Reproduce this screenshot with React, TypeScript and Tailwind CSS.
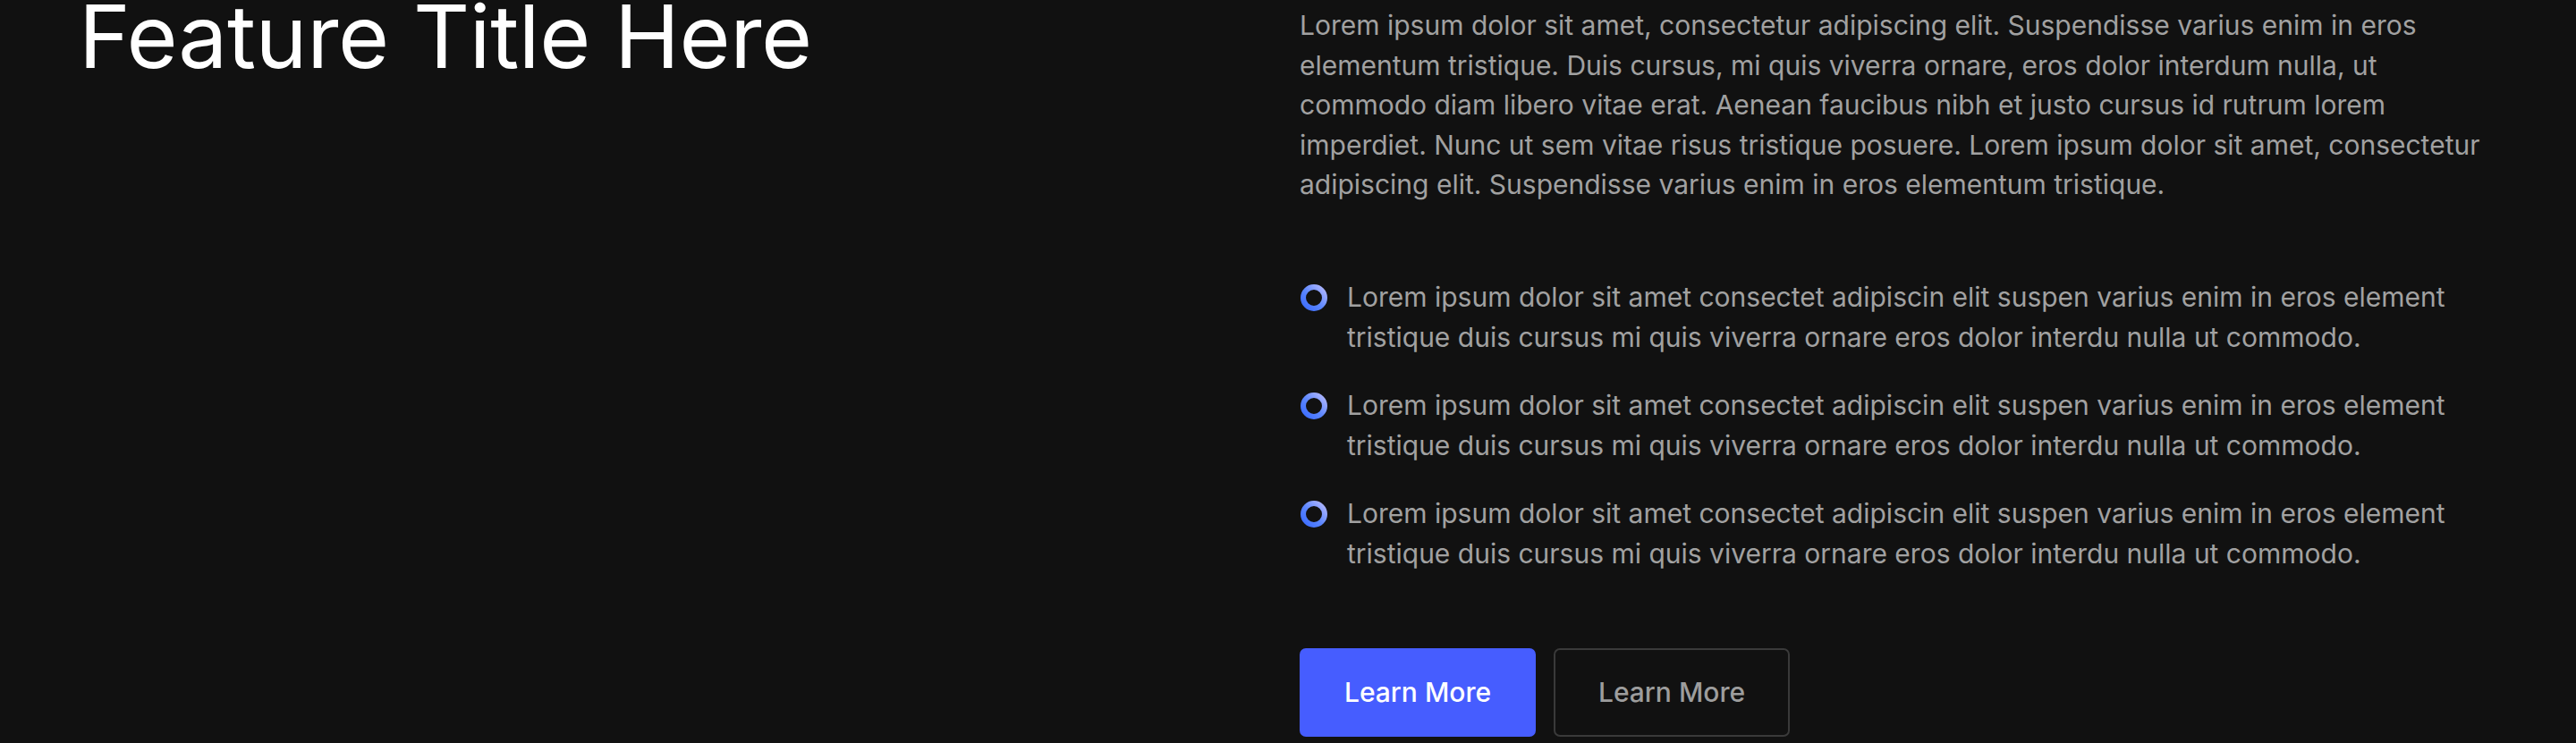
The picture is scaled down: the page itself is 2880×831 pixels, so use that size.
import React from "react";

const items = [
  "Lorem ipsum dolor sit amet consectet adipiscin elit suspen varius enim in eros element tristique duis cursus mi quis viverra ornare eros dolor interdu nulla ut commodo.",
  "Lorem ipsum dolor sit amet consectet adipiscin elit suspen varius enim in eros element tristique duis cursus mi quis viverra ornare eros dolor interdu nulla ut commodo.",
  "Lorem ipsum dolor sit amet consectet adipiscin elit suspen varius enim in eros element tristique duis cursus mi quis viverra ornare eros dolor interdu nulla ut commodo.",
];

// Ring bullet with a blue-to-lavender gradient
const RingIcon: React.FC<{ id: string }> = ({ id }) => (
  <svg width="32" height="32" viewBox="0 0 32 32" className="shrink-0 mt-[7px]">
    <defs>
      <linearGradient id={id} x1="0" y1="1" x2="1" y2="0">
        <stop offset="0%" stopColor="#3b6cff" />
        <stop offset="45%" stopColor="#5b86ff" />
        <stop offset="100%" stopColor="#b3b8ff" />
      </linearGradient>
    </defs>
    <circle cx="16" cy="16" r="12" fill="none" stroke={`url(#${id})`} strokeWidth="6" />
  </svg>
);

const App: React.FC = () => {
  return (
    <div
      className="min-h-[831px] w-full bg-[#111111] overflow-hidden"
      style={{ fontFamily: "Inter, 'Noto Sans', sans-serif" }}
    >
      <div className="grid grid-cols-[1fr_1331px] gap-x-[34px] pl-[88px] pr-[96px] pt-[6px]">
        {/* Left: title */}
        <div>
          <h2 className="-mt-[24px] text-[98px] leading-[1.2] font-normal text-white tracking-[-0.004em]">
            Feature Title Here
          </h2>
        </div>

        {/* Right: copy, list, buttons */}
        <div className="flex flex-col">
          <p className="text-[30px] leading-[44.6px] text-[#a1a1a1]">
            Lorem ipsum dolor sit amet, consectetur adipiscing elit. Suspendisse varius enim in eros
            elementum tristique. Duis cursus, mi quis viverra ornare, eros dolor interdum nulla, ut
            commodo diam libero vitae erat. Aenean faucibus nibh et justo cursus id rutrum lorem
            imperdiet. Nunc ut sem vitae risus tristique posuere. Lorem ipsum dolor sit amet,
            consectetur adipiscing elit. Suspendisse varius enim in eros elementum tristique.
          </p>

          <ul className="mt-[81px] flex flex-col gap-[32px]">
            {items.map((text, i) => (
              <li key={i} className="flex items-start gap-[21px]">
                <RingIcon id={`ring-${i}`} />
                <span className="text-[30px] leading-[44.6px] text-[#a1a1a1]">{text}</span>
              </li>
            ))}
          </ul>

          <div className="mt-[83px] flex gap-[20px]">
            <button className="h-[99px] w-[264px] rounded-[7px] bg-[#465dff] text-[30px] font-medium text-white">
              Learn More
            </button>
            <button className="h-[99px] w-[264px] rounded-[7px] border-2 border-[#3a3a3a] text-[30px] font-medium text-[#9d9d9d]">
              Learn More
            </button>
          </div>
        </div>
      </div>
    </div>
  );
};

export default App;
